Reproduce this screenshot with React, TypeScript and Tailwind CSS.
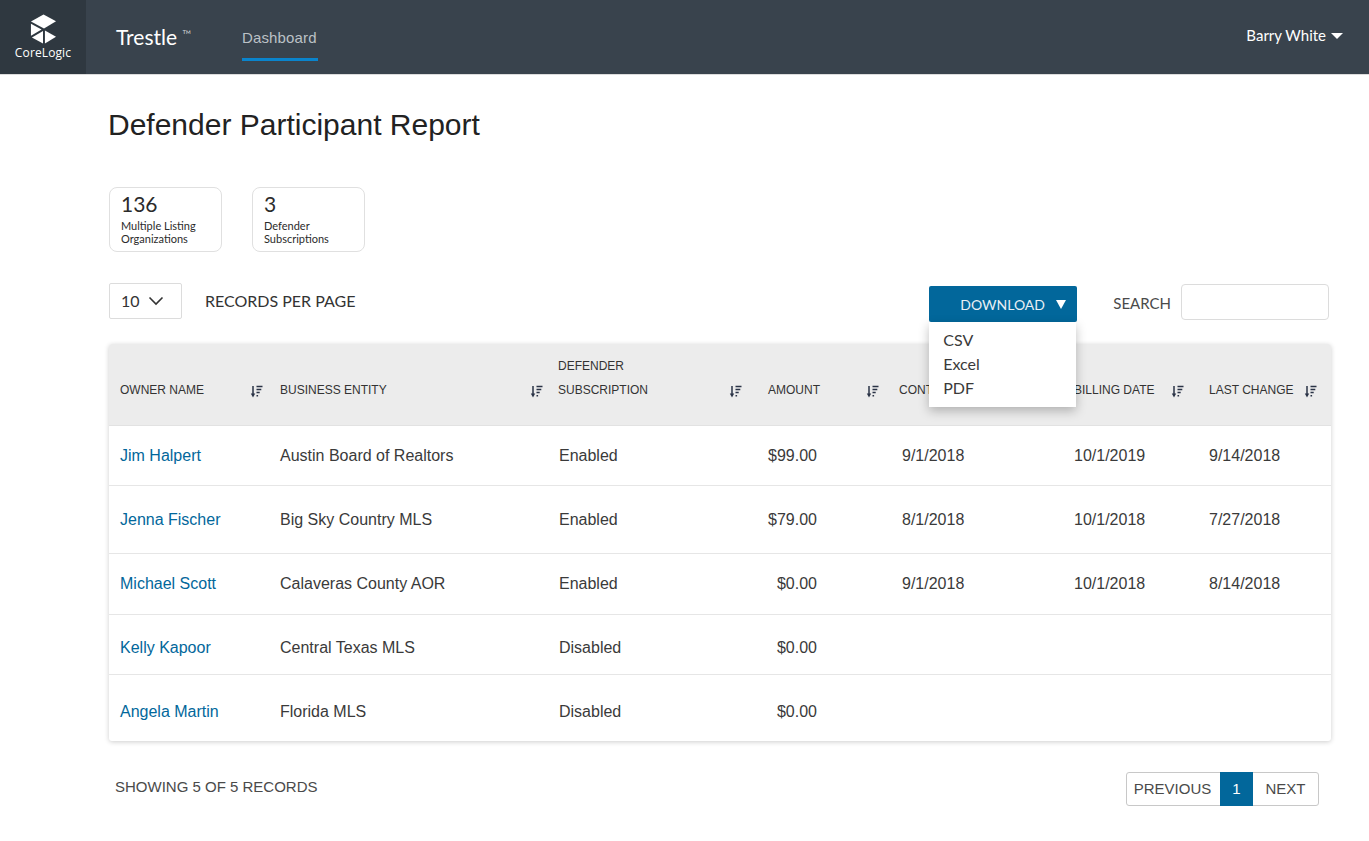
const sans = "font-['Liberation_Sans',Arial,sans-serif]";
const lato = "font-['Lato',sans-serif]";

const COLS = "grid grid-cols-[171px_279px_209px_131px_175px_135px_122px]";

const rows = [
  { name: "Jim Halpert", entity: "Austin Board of Realtors", sub: "Enabled", amount: "$99.00", contract: "9/1/2018", billing: "10/1/2019", change: "9/14/2018", h: "h-[60px]", pt: "pt-[21px]" },
  { name: "Jenna Fischer", entity: "Big Sky Country MLS", sub: "Enabled", amount: "$79.00", contract: "8/1/2018", billing: "10/1/2018", change: "7/27/2018", h: "h-[68px]", pt: "pt-[25px]" },
  { name: "Michael Scott", entity: "Calaveras County AOR", sub: "Enabled", amount: "$0.00", contract: "9/1/2018", billing: "10/1/2018", change: "8/14/2018", h: "h-[61px]", pt: "pt-[21px]" },
  { name: "Kelly Kapoor", entity: "Central Texas MLS", sub: "Disabled", amount: "$0.00", contract: "", billing: "", change: "", h: "h-[60px]", pt: "pt-[24px]" },
  { name: "Angela Martin", entity: "Florida MLS", sub: "Disabled", amount: "$0.00", contract: "", billing: "", change: "", h: "h-[66px]", pt: "pt-[28px]" },
];

function SortIcon() {
  return (
    <svg width="13" height="13" viewBox="0 0 13 13" className="shrink-0 text-[#2a3346]" fill="none" stroke="currentColor">
      <path d="M3 1v9" strokeWidth="1.5" />
      <path d="M0.8 8.6h4.4L3 12.4z" fill="currentColor" stroke="none" />
      <path d="M6.5 1.6h6M6.5 4.6h4.8M6.5 7.6h3.2M6.5 10.8h1.6" strokeWidth="1.5" />
    </svg>
  );
}

function HeadCell({ label, iconLeft, nudge, extra }: { label: string; iconLeft: string; nudge?: string; extra?: string }) {
  return (
    <div className="relative h-full">
      {extra && <span className={`absolute top-[15px] text-[12px] leading-[14px] text-[#333] ${nudge ?? ""}`}>{extra}</span>}
      <span className={`absolute top-[39px] whitespace-nowrap text-[12px] leading-[14px] text-[#333] ${nudge ?? ""}`}>{label}</span>
      <span className={`absolute top-[41px] ${iconLeft}`}>
        <SortIcon />
      </span>
    </div>
  );
}

function Logo() {
  return (
    <svg width="27" height="30" viewBox="0 0 28 31" fill="white">
      <path d="M14 0.5L27 7.5L14.5 15L1 7.8z" />
      <path d="M1 10L12 16L1 22.5z" />
      <path d="M13.5 17.5V30.5L2 24.2z" />
      <path d="M15.5 17L27 23.5L15.5 30.5z" />
    </svg>
  );
}

function StatCard({ n, a, b }: { n: string; a: string; b: string }) {
  return (
    <div className="h-[65px] w-[113px] rounded-[8px] border border-[#e0e0e0] pl-[11px] pt-[3px] text-[#2b2b2b]">
      <div className="text-[21px] leading-[26px]">{n}</div>
      <div className="mt-[2px] text-[11px] leading-[13px]">{a}</div>
      <div className="text-[11px] leading-[13px]">{b}</div>
    </div>
  );
}

export default function App() {
  return (
    <div className={`min-h-[841px] bg-white ${sans}`}>
      <header className="flex h-[75px] items-stretch border-b border-[#dcdcdc] bg-[#39434d] text-white">
        <div className="flex w-[86px] flex-col items-center bg-[#2f3840] pt-[14px]">
          <Logo />
          <span className="mt-[2px] font-['Open_Sans',sans-serif] text-[12px] leading-[13px] tracking-[0.01em]">CoreLogic</span>
        </div>
        <div className={`ml-[30px] w-[75px] whitespace-nowrap pt-[24px] text-[21px] leading-[26px] ${lato}`}>
          Trestle <span className="align-[6px] text-[12px] font-light leading-none">™</span>
        </div>
        <nav className="ml-[51px] h-[61px] w-[76px] border-b-[3px] border-[#0a84cc] pt-[29px] text-[15px] leading-[18px] tracking-[0.01em] text-[#bcc1c6]">
          Dashboard
        </nav>
        <div className={`ml-auto flex items-start pr-[26px] pt-[26px] text-[15px] leading-[19px] ${lato}`}>
          Barry White
          <span className="ml-[5px] mt-[7px] h-0 w-0 border-x-[6px] border-t-[6px] border-x-transparent border-t-white" />
        </div>
      </header>

      <main className="pl-[109px] pr-[38px]">
        <h1 className="-ml-[1px] pt-[32px] text-[30px] font-normal leading-[36px] text-[#222]">Defender Participant Report</h1>

        <div className={`mt-[44px] flex gap-[30px] ${lato}`}>
          <StatCard n="136" a="Multiple Listing" b="Organizations" />
          <StatCard n="3" a="Defender" b="Subscriptions" />
        </div>

        <div className={`relative z-10 mt-[31px] flex h-[37px] items-start ${lato}`}>
          <div className="flex h-[36px] w-[73px] items-center rounded-[2px] border border-[#dcdcdc] pl-[11px] text-[16px] text-[#333]">
            10
            <svg width="16" height="10" viewBox="0 0 16 10" fill="none" stroke="#333" strokeWidth="1.6" className="ml-[8px]">
              <path d="M1.5 1.5L8 8L14.5 1.5" />
            </svg>
          </div>
          <span className="ml-[23px] mt-[9px] text-[16px] leading-[18px] text-[#333]">RECORDS PER PAGE</span>

          <div className="relative ml-auto mr-[36px] mt-[3px] w-[148px]">
            <button className="flex h-[36px] w-full items-center rounded-[2px] bg-[#02679b] pl-[31px] text-[14px] text-[#e8f0f5]">
              DOWNLOAD
              <span className="ml-[11px] h-0 w-0 border-x-[5px] border-t-[9px] border-x-transparent border-t-white" />
            </button>
            <div className="absolute left-0 top-[36px] h-[85px] w-[147px] bg-white pl-[14px] pt-[6px] text-[16px] leading-[24px] text-[#3a3a3a] shadow-[0_4px_10px_rgba(0,0,0,0.25)]">
              <div>CSV</div>
              <div>Excel</div>
              <div>PDF</div>
            </div>
          </div>
          <span className="mr-[10px] mt-[11px] text-[15px] leading-[18px] text-[#4a4a4a]">SEARCH</span>
          <input aria-label="Search" className="mr-[2px] mt-[1px] h-[36px] w-[148px] rounded-[4px] border border-[#dcdcdc] bg-white" />
        </div>

        <section className="mt-[24px] w-[1222px] rounded-[3px] shadow-[0_1px_5px_rgba(0,0,0,0.2)]">
          <div className={`${COLS} h-[82px] rounded-t-[3px] border-b border-[#e2e2e2] bg-[#ececec]`}>
            <div className="pl-[11px]">
              <HeadCell label="OWNER NAME" iconLeft="ml-[130px]" />
            </div>
            <HeadCell label="BUSINESS ENTITY" iconLeft="ml-[250px]" />
            <HeadCell label="SUBSCRIPTION" extra="DEFENDER" nudge="-ml-[1px]" iconLeft="ml-[170px]" />
            <HeadCell label="AMOUNT" iconLeft="ml-[98px]" />
            <HeadCell label="CONTRACT DATE" iconLeft="ml-[140px]" />
            <HeadCell label="BILLING DATE" iconLeft="ml-[97px]" />
            <HeadCell label="LAST CHANGE" iconLeft="ml-[95px]" />
          </div>
          {rows.map((r, i) => (
            <div key={r.name} className={`${COLS} ${r.h} ${r.pt} ${i < rows.length - 1 ? "border-b border-[#e6e6e6]" : ""} text-[16px] leading-[18px] text-[#3a3a3a]`}>
              <a className="pl-[11px] text-[#02679b]">{r.name}</a>
              <span>{r.entity}</span>
              <span>{r.sub}</span>
              <span className="pr-[82px] text-right">{r.amount}</span>
              <span className="pl-[3px]">{r.contract}</span>
              <span>{r.billing}</span>
              <span>{r.change}</span>
            </div>
          ))}
        </section>

        <div className="mt-[31px] flex w-[1222px] items-start justify-between">
          <span className="ml-[6px] mt-[6px] text-[15px] leading-[18px] text-[#4a4a4a]">SHOWING 5 OF 5 RECORDS</span>
          <div className="mr-[12px] flex h-[34px] items-stretch rounded-[3px] border border-[#c8c8c8] text-[15px] text-[#4a4a4a]">
            <span className="flex w-[93px] items-center justify-center pr-[2px]">PREVIOUS</span>
            <span className="-my-px flex w-[33px] items-center justify-center bg-[#02679b] text-white">1</span>
            <span className="flex w-[65px] items-center justify-center">NEXT</span>
          </div>
        </div>
      </main>
    </div>
  );
}
